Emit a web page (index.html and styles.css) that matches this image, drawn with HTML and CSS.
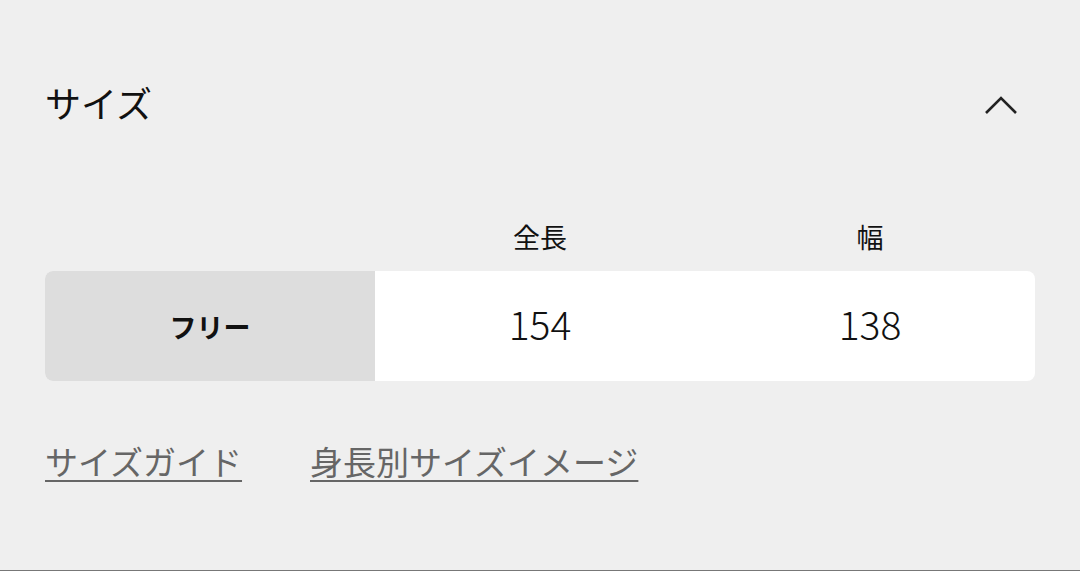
FILE: index.html
```html
<!DOCTYPE html>
<html lang="ja">
<head>
<meta charset="utf-8">
<link rel="stylesheet" href="styles.css">
</head>
<body>
<div class="page">
  <div class="head">
    <h2 class="title">サイズ</h2>
    <svg class="chev" width="34" height="20" viewBox="0 0 34 20"><path d="M2 18 L17 3 L32 18" fill="none" stroke="#222" stroke-width="2.6"/></svg>
  </div>
  <div class="table">
    <div class="thead">
      <div class="c"></div>
      <div class="c">全長</div>
      <div class="c">幅</div>
    </div>
    <div class="trow">
      <div class="c name">フリー</div>
      <div class="c val">154</div>
      <div class="c val">138</div>
    </div>
  </div>
  <div class="links">
    <a class="lnk">サイズガイド</a>
    <a class="lnk">身長別サイズイメージ</a>
  </div>
</div>
</body>
</html>
```
FILE: styles.css
```css
html, body { margin: 0; padding: 0; }
body {
  background: #efefef;
  font-family: "Noto Sans CJK JP", "Noto Sans", sans-serif;
  color: #111;
  width: 1080px;
  height: 571px;
  overflow: hidden;
}
.page {
  border-bottom: 1px solid #777;
  padding: 62px 45px 0;
  box-sizing: border-box;
  height: 571px;
}
.head {
  display: flex;
  justify-content: space-between;
  align-items: center;
  height: 80px;
}
.title {
  margin: 0;
  font-size: 36px;
  font-weight: 400;
  line-height: 1;
}
.chev { margin-right: 17px; transform: translateY(3px); }
.table { margin-top: 60px; }
.thead {
  display: grid;
  grid-template-columns: 330px 330px 330px;
  height: 69px;
  align-items: center;
  font-size: 27px;
}
.thead .c { text-align: center; }
.trow {
  display: grid;
  grid-template-columns: 330px 330px 330px;
  height: 110px;
  background: #fff;
  border-radius: 8px;
  overflow: hidden;
}
.trow .c {
  display: flex;
  align-items: center;
  justify-content: center;
}
.name { background: #dddddd; font-weight: 700; font-size: 27px; }
.val { font-size: 39px; font-weight: 300; padding-bottom: 6px; }
.links {
  display: flex;
  gap: 68px;
  margin-top: 61px;
}
.lnk {
  font-size: 33px;
  color: #666;
  text-decoration: underline;
  text-decoration-thickness: 2px;
  text-underline-offset: 5px;
  line-height: 1.2;
}
```
